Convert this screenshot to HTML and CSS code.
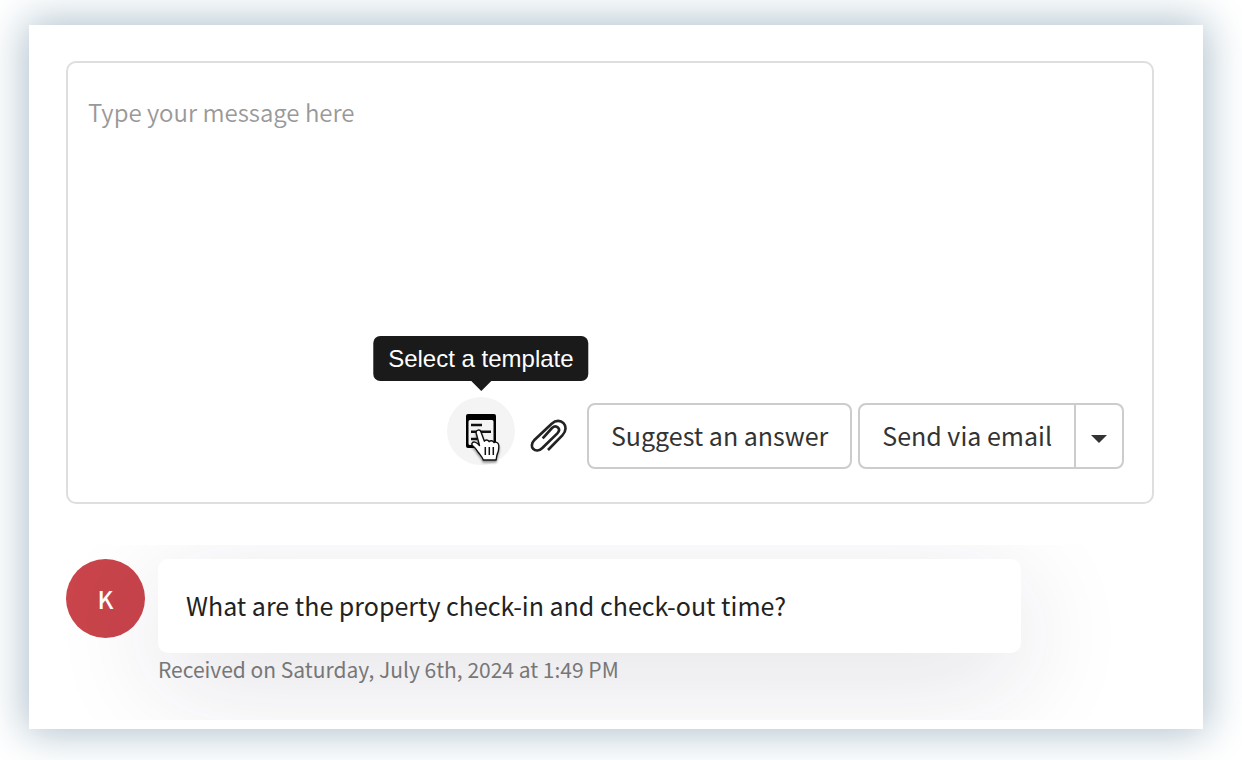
FILE: index.html
```html
<!DOCTYPE html>
<html lang="en">
<head>
<meta charset="utf-8">
<title>Messages</title>
<link rel="stylesheet" href="styles.css">
</head>
<body>
<main class="panel">
  <form class="composer">
    <textarea class="composer-input" aria-label="Message" placeholder="Type your message here"></textarea>
    <div class="toolbar">
      <div class="template">
        <button class="icon-button round" type="button" aria-label="Select a template" aria-describedby="template-tip">
          <svg width="32" height="36" viewBox="0 0 32 36" aria-hidden="true">
            <path fill="#000" fill-rule="evenodd" d="M3 1h26a2 2 0 0 1 2 2v30a2 2 0 0 1-2 2H3a2 2 0 0 1-2-2V3a2 2 0 0 1 2-2zM5 7a1.500 1.500 0 0 0-1.500 1.500v22A1.500 1.500 0 0 0 5 32h22a1.500 1.500 0 0 0 1.500-1.500v-22A1.500 1.500 0 0 0 27 7z"/>
            <path stroke="#111" stroke-width="2.400" d="M6 12H17M6 18.700H26M6 26H12"/>
          </svg>
        </button>
        <svg class="cursor" width="32" height="34" viewBox="0 0 32 34" aria-hidden="true">
          <path fill="#fff" stroke="#111" stroke-width="1.400" stroke-linejoin="round" d="M9.500 17.500 6.200 5.200C5.500 1.800 10 .8 11 4l3.400 9.200c.8-1.800 4-1.700 4.800.5 1-1.500 4-1.200 4.700.9 1.500-1 4.400-.2 4.800 2.400.4 4 .1 6.500-1.700 9.800l-.9 5.200H13.300c-.8-3-3.300-5.200-5.300-8C6.300 21.500 5 19.500 3 18c-2.500-2-.5-4.500 2-3.800 1.700.5 3 1.600 4.500 3.300z"/>
          <path fill="none" stroke="#111" stroke-width="1.500" d="M15.300 19v8M19.300 19v8M23.300 19v8"/>
        </svg>
        <span class="tooltip" id="template-tip" role="tooltip">Select a template</span>
      </div>
      <button class="icon-button attach" type="button" aria-label="Attach a file">
        <svg width="50" height="48" viewBox="0 0 150 144" aria-hidden="true">
          <path fill="none" stroke="#222" stroke-width="8" d="M72 114 115 70C141 42 109 12 83 35L32 83C10 106 36 127 55 108L100 64C113 50 97 36 84 48L56 79"/>
        </svg>
      </button>
      <button class="button suggest" type="button">Suggest an answer</button>
      <div class="split">
        <button class="button send" type="submit">Send via email</button>
        <button class="button more" type="button" aria-label="More sending options"><span class="caret"></span></button>
      </div>
    </div>
  </form>
  <section class="thread">
    <div class="avatar">K</div>
    <article class="message">
      <p class="bubble">What are the property check-in and check-out time?</p>
      <p class="received">Received on Saturday, July 6th, 2024 at 1:49 PM</p>
    </article>
  </section>
</main>
</body>
</html>
```

FILE: styles.css
```css
* {
  box-sizing: border-box;
}

body {
  margin: 0;
  padding: 25px 39px 31px 29px;
  background: #fff;
  font-family: "Noto Sans CJK SC", "Open Sans", sans-serif;
  color: #222;
}

.panel {
  padding: 36px 49px 9px 37px;
  background: #fff;
  box-shadow: 0 0 40px 4px #adc0cc;
}

.composer {
  display: flex;
  flex-direction: column;
  padding-bottom: 33px;
  border: 2px solid #dedede;
  border-radius: 10px;
}

.composer-input {
  height: 334px;
  padding: 31px 20px;
  border: 0;
  outline: 0;
  resize: none;
  background: transparent;
  font: 350 24px/36px "Noto Sans CJK SC", "Open Sans", sans-serif;
  color: #222;
}

.composer-input::placeholder {
  color: #999;
  opacity: 1;
}

.toolbar {
  display: flex;
  justify-content: flex-end;
  align-items: flex-end;
  height: 72px;
  padding-right: 28px;
}

.template {
  position: relative;
  align-self: flex-start;
}

.icon-button {
  display: flex;
  align-items: center;
  justify-content: center;
  width: 68px;
  height: 66px;
  padding: 0;
  border: 0;
  background: none;
}

.round {
  height: 68px;
  border-radius: 50%;
  background: #f4f4f4;
}

.cursor {
  position: absolute;
  top: 31px;
  left: 23px;
  filter: drop-shadow(0 2px 1px rgba(0, 0, 0, 0.4));
}

.tooltip {
  position: absolute;
  bottom: 84px;
  left: 50%;
  transform: translateX(-50%);
  padding: 0 15px;
  border-radius: 7px;
  background: #1a1a1a;
  color: #fff;
  font: 24px/45px "Liberation Sans", sans-serif;
  white-space: nowrap;
}

.tooltip::after {
  content: "";
  position: absolute;
  top: 100%;
  left: 50%;
  margin-left: -10px;
  border: 10px solid transparent;
  border-top-color: #1a1a1a;
  border-bottom: 0;
}

.attach {
  margin-right: 4px;
}

.button {
  height: 66px;
  padding: 0 22px 2px;
  border: 2px solid #ccc;
  border-radius: 8px;
  background: #fff;
  color: #333;
  font: 25px/36px "Noto Sans CJK SC", "Open Sans", sans-serif;
  white-space: nowrap;
}

.split {
  display: flex;
  margin-left: 6px;
}

.send {
  border-radius: 8px 0 0 8px;
}

.more {
  width: 50px;
  margin-left: -2px;
  padding: 0 0 2px;
  border-radius: 0 8px 8px 0;
}

.caret {
  display: inline-block;
  border: 8px solid transparent;
  border-top-color: #333;
  border-bottom: 0;
  vertical-align: middle;
}

.thread {
  display: flex;
  align-items: flex-start;
  gap: 13px;
  margin-top: 41px;
  padding: 14px 133px 35px 0;
  overflow: hidden;
}

.avatar {
  flex: none;
  width: 79px;
  border-radius: 50%;
  background: #c9444b;
  color: #fff;
  font-size: 24px;
  font-weight: 500;
  line-height: 79px;
  text-align: center;
}

.message {
  flex: 1;
}

.bubble {
  margin: 0;
  padding: 28px 28px 30px;
  border-radius: 10px;
  background: #fff;
  box-shadow: 0 28px 110px rgba(40, 30, 70, 0.14);
  font-size: 25px;
  line-height: 36px;
}

.received {
  position: relative;
  margin: 0;
  color: #777;
  font-size: 21px;
  line-height: 32px;
}
```
